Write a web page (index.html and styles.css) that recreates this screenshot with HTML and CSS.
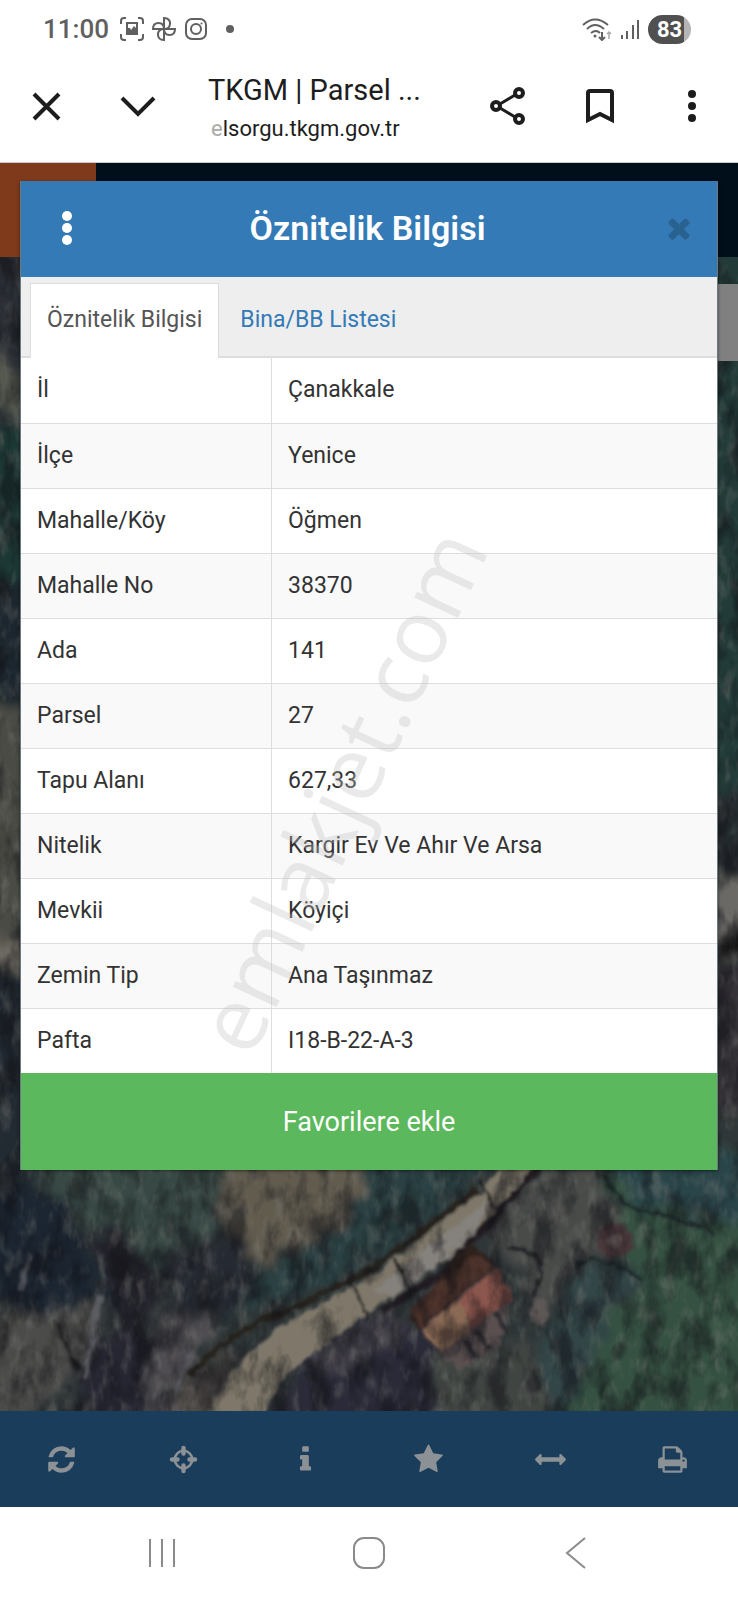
FILE: index.html
```html
<!DOCTYPE html>
<html lang="tr">
<head>
  <meta charset="UTF-8" />
  <meta name="viewport" content="width=device-width, initial-scale=1.0" />
  <title>TKGM | Parsel Sorgu</title>
  <link rel="stylesheet" href="styles.css">
</head>
<body>
  <header class="status-bar">
    <div class="status-left">
      <span class="clock">11:00</span>
      <svg class="status-icon" viewBox="0 0 24 24" fill="none" stroke="currentColor" stroke-width="2">
        <path d="M1 7V4q0-3 3-3h2M18 1h2q3 0 3 3v3M23 17v3q0 3-3 3h-2M6 23H4q-3 0-3-3v-3" />
        <path d="M7 6h10v11H7z" />
        <path d="M7 11l3 0 1 2 3-4 3 3v5H7z" fill="currentColor" stroke="none" />
      </svg>
      <svg class="status-icon" viewBox="0 0 24 24" fill="none" stroke="currentColor" stroke-width="2">
        <path d="M12 12V1q6 0 6 5.500T12 12h11q0 6-5.500 6T12 12v11q-6 0-6-5.500T12 12H1q0-6 5.500-6T12 12" />
      </svg>
      <svg class="status-icon" viewBox="0 0 24 24" fill="none" stroke="currentColor" stroke-width="2">
        <rect x="2" y="2" width="20" height="20" rx="6" />
        <circle cx="12" cy="12" r="5" />
        <circle cx="17.500" cy="6.500" r="1" fill="currentColor" stroke="none" />
      </svg>
      <span class="status-dot"></span>
    </div>
    <div class="status-right">
      <svg class="wifi" viewBox="0 0 30 24" fill="none" stroke="currentColor" stroke-width="2">
        <path d="M1 8q12-11 25 0M5 12q8-8 17 0M9 16q5-4 9 0" />
        <circle cx="13" cy="19" r="1.500" fill="currentColor" stroke="none" />
        <path d="M20 15v8M17 20l3 3 3-3" />
        <path d="M27 22v-7M25 17l2-2 2 2" stroke="#aaa" stroke-width="1.500" />
      </svg>
      <svg class="signal" viewBox="0 0 20 20" stroke="currentColor" stroke-width="2">
        <path d="M2 16v4M7 12v8M13 6v14M18 1v19" />
      </svg>
      <span class="battery">83</span>
    </div>
  </header>

  <div class="browser-bar">
    <button class="browser-btn" aria-label="Kapat">
      <svg viewBox="0 0 40 40" fill="none" stroke="currentColor" stroke-width="4"><path d="M8 8l25 25M33 8L8 33" /></svg>
    </button>
    <button class="browser-btn down" aria-label="Küçült">
      <svg viewBox="0 0 40 40" fill="none" stroke="currentColor" stroke-width="4"><path d="M4 12l16 16 16-16" /></svg>
    </button>
    <div class="page-info">
      <div class="page-title">TKGM | Parsel ...</div>
      <div class="page-url"><span class="faded">e</span>lsorgu.tkgm.gov.tr</div>
    </div>
    <button class="browser-btn share" aria-label="Paylaş">
      <svg viewBox="0 0 40 40" fill="none" stroke="currentColor" stroke-width="4">
        <circle cx="8" cy="20" r="4" /><circle cx="31" cy="7" r="4" /><circle cx="31" cy="33" r="4" />
        <path d="M12 18L27 9M12 22l15 9" stroke-width="3" />
      </svg>
    </button>
    <button class="browser-btn mark" aria-label="Yer işareti">
      <svg viewBox="0 0 40 40" fill="none" stroke="currentColor" stroke-width="4"><path d="M8 34V7q0-2 2-2h20q2 0 2 2v27l-12-6z" /></svg>
    </button>
    <button class="browser-btn more" aria-label="Diğer">
      <svg viewBox="0 0 40 40" fill="currentColor"><circle cx="20" cy="8" r="4" /><circle cx="20" cy="20" r="4" /><circle cx="20" cy="32" r="4" /></svg>
    </button>
  </div>

  <main class="app">
    <div class="app-header"><div class="app-logo"></div></div>

    <div class="map">
      <svg class="map-image" viewBox="0 257 738 1154" preserveAspectRatio="xMidYMax slice">
        <defs>
          <filter id="rough" x="-5%" y="-5%" width="110%" height="110%">
            <feTurbulence type="fractalNoise" baseFrequency="0.05" numOctaves="4" seed="4" result="n" />
            <feDisplacementMap in="SourceGraphic" in2="n" scale="36" xChannelSelector="R" yChannelSelector="G" />
            <feGaussianBlur stdDeviation="4" />
          </filter>
          <filter id="soft">
            <feTurbulence type="fractalNoise" baseFrequency="0.09" numOctaves="3" seed="2" result="n" />
            <feDisplacementMap in="SourceGraphic" in2="n" scale="9" xChannelSelector="R" yChannelSelector="G" />
            <feGaussianBlur stdDeviation="1.500" />
          </filter>
          <filter id="shade" x="0" y="0" width="100%" height="100%" color-interpolation-filters="sRGB">
            <feTurbulence type="fractalNoise" baseFrequency="0.045 0.025" numOctaves="4" seed="9" />
            <feColorMatrix values="0 0 0 0 0.06  0 0 0 0 0.06  0 0 0 0 0.08  2.5 2 0 0 -2" />
          </filter>
          <filter id="light" x="0" y="0" width="100%" height="100%" color-interpolation-filters="sRGB">
            <feTurbulence type="fractalNoise" baseFrequency="0.08 0.04" numOctaves="3" seed="21" />
            <feColorMatrix values="0 0 0 0 0.5  0 0 0 0 0.5  0 0 0 0 0.48  2.5 2 0 0 -2.2" />
          </filter>
        </defs>
        <rect y="257" width="738" height="1154" fill="#303738" />
        <g filter="url(#rough)">
          <!-- left edge -->
          <path d="M-10 250H40V375L-10 350z" fill="#2b2d35" />
          <path d="M-10 345L40 385V430L-10 400z" fill="#55584f" />
          <path d="M-10 425H40V580H-10z" fill="#1d3934" />
          <path d="M-10 580H40V700H-10z" fill="#1d272e" />
          <path d="M-10 710H40V960H-10z" fill="#4c4b45" />
          <path d="M-10 940H40V970H-10z" fill="#6b665f" />
          <path d="M-10 975H40V1180H-10z" fill="#232b33" />
          <!-- right edge -->
          <path d="M700 240H760V790H700z" fill="#213a39" />
          <path d="M700 790H760V880H700z" fill="#252e33" />
          <path d="M700 885L760 870V950L700 970z" fill="#6b6965" />
          <path d="M700 952L760 920V940L700 970z" fill="#161616" />
          <path d="M700 970H760V1110H700z" fill="#343238" />
          <!-- fields -->
          <path d="M20 1155H225L210 1230 150 1270 90 1235 60 1195z" fill="#384a45" />
          <path d="M222 1155H370L350 1225 260 1262 222 1225z" fill="#625c4f" />
          <path d="M375 1155H495L440 1215 350 1275 230 1320 240 1280 340 1235z" fill="#2b3f42" />
          <path d="M590 1150H760V1430H560L600 1340 640 1280 610 1220z" fill="#345143" />
          <path d="M610 1155H760V1225L640 1210z" fill="#2c444a" />
          <path d="M520 1170L600 1160 625 1240 575 1275 545 1310 510 1260 480 1230z" fill="#4a4b49" />
          <path d="M580 1270L640 1265 600 1340 560 1430H500L550 1330z" fill="#334446" />
          <!-- tree shadows -->
          <path d="M-10 1180L60 1195 95 1260 105 1310 50 1315-10 1300z" fill="#1f2533" />
          <path d="M95 1225L130 1235 160 1290 140 1350 105 1300z" fill="#23222a" />
          <path d="M160 1265L235 1225 260 1265 230 1320 180 1315z" fill="#252931" />
          <path d="M60 1340L120 1330 160 1345 145 1430H90z" fill="#272831" />
          <path d="M5 1310L100 1305 80 1370 20 1430H-10V1340z" fill="#4c4c4a" />
          <path d="M160 1310L210 1320 175 1430H150z" fill="#4f4e51" />
          <path d="M180 1380L240 1350 210 1430H175z" fill="#4a4542" />
          <path d="M270 1430L300 1360 370 1310 430 1330 450 1430z" fill="#2b2a37" />
          <path d="M290 1360L380 1310 410 1335 350 1370z" fill="#403e46" />
          <path d="M430 1345L530 1345 560 1430H440z" fill="#404543" />
        </g>
        <rect y="257" width="738" height="1154" filter="url(#light)" opacity=".35" />
        <g filter="url(#soft)">
          <!-- road -->
          <path d="M206 1420Q235 1350 300 1315L378 1272 430 1230 480 1193 505 1160H542L515 1193 475 1240 400 1290 345 1330 285 1375 262 1420z" fill="#7f786a" />
          <path d="M375 1290L490 1198 475 1235 395 1298z" fill="#85817c" />
          <path d="M190 1375Q235 1325 290 1310L370 1270 478 1190" fill="none" stroke="#25231d" stroke-width="6" />
          <path d="M545 1160L490 1222 440 1275 380 1312" fill="none" stroke="#211f22" stroke-width="7" />
          <path d="M350 1275l18 44M395 1260l18 35M480 1180l15 30M55 1322l25 50" stroke="#1c1e1f" stroke-width="3" />
          <path d="M100 1295L84 1380M30 1255l-10 35M175 1395l15-40" stroke="#5c5d64" stroke-width="5" />
          <!-- house -->
          <path d="M408 1318L470 1242 497 1264 420 1330z" fill="#2f211f" />
          <path d="M410 1310L466 1260 480 1255 495 1265 420 1328z" fill="#4b302b" />
          <path d="M423 1329L497 1267 514 1298 490 1325 440 1354z" fill="#8b564d" />
          <path d="M423 1329L460 1300 475 1332 440 1354z" fill="#8a6a55" />
          <path d="M440 1354L490 1315 510 1300 500 1345 460 1370z" fill="#5a4f50" />
          <path d="M465 1340l12 18M475 1330l14 20M496 1312l12 22" stroke="#2b2b2f" stroke-width="5" />
          <!-- garden -->
          <circle cx="615" cy="1240" r="18" fill="#48383a" />
          <circle cx="615" cy="1240" r="7" fill="#625552" />
          <path d="M507 1248Q560 1250 532 1295" fill="none" stroke="#222325" stroke-width="4" />
          <path d="M575 1268l14-10q30 5 52 21M605 1175q10 35 60 40l50 18" fill="none" stroke="#1d282a" stroke-width="3" />
          <ellipse cx="540" cy="1312" rx="10" ry="14" fill="#5d5856" />
        </g>
        <rect y="257" width="738" height="1154" filter="url(#shade)" opacity=".5" />
      </svg>
      <div class="map-control"></div>
    </div>

    <nav class="toolbar">
      <button class="tool" aria-label="Yenile"><svg viewBox="0 0 1792 1792"><path d="M1639 1056q0 5-1 7-64 268-268 434.500t-478 166.500q-146 0-282.500-55t-243.500-157l-129 129q-19 19-45 19t-45-19-19-45v-448q0-26 19-45t45-19h448q26 0 45 19t19 45-19 45l-137 137q71 66 161 102t187 36q134 0 250-65t186-179q11-17 53-117 8-23 30-23h192q13 0 22.500 9.500t9.500 22.500zm25-800v448q0 26-19 45t-45 19h-448q-26 0-45-19t-19-45 19-45l138-138q-148-137-349-137-134 0-250 65t-186 179q-11 17-53 117-8 23-30 23h-199q-13 0-22.500-9.500t-9.500-22.500v-7q65-268 270-434.500t480-166.500q146 0 284 55.500t245 156.500l130-129q19-19 45-19t45 19 19 45z" /></svg></button>
      <button class="tool" aria-label="Konum"><svg class="locate" viewBox="0 0 31 31"><circle cx="15.500" cy="15.500" r="8.700" stroke-width="2.600" /><path d="M15.500 4v5.500M15.500 21.500V27M4 15.500h5.500M21.500 15.500H27" stroke-width="4.400" stroke-linecap="round" /></svg></button>
      <button class="tool" aria-label="Bilgi"><svg viewBox="0 0 1792 1792"><path d="M1216 1344v128q0 26-19 45t-45 19h-512q-26 0-45-19t-19-45v-128q0-26 19-45t45-19h64v-384h-64q-26 0-45-19t-19-45v-128q0-26 19-45t45-19h384q26 0 45 19t19 45v576h64q26 0 45 19t19 45zm-128-1152v192q0 26-19 45t-45 19h-256q-26 0-45-19t-19-45v-192q0-26 19-45t45-19h256q26 0 45 19t19 45z" /></svg></button>
      <button class="tool" aria-label="Favoriler"><svg viewBox="0 0 1792 1792"><path d="M1728 647q0 22-26 48l-363 354 86 500q1 7 1 20 0 21-10.500 35.500t-30.500 14.500q-19 0-40-12l-449-236-449 236q-22 12-40 12-21 0-31.500-14.500t-10.500-35.500q0-6 2-20l86-500-364-354q-25-27-25-48 0-37 56-46l502-73 225-455q19-41 49-41t49 41l225 455 502 73q56 9 56 46z" /></svg></button>
      <button class="tool" aria-label="Ölçüm"><svg viewBox="0 0 1792 1792"><path d="M1792 896q0 26-19 45l-256 256q-19 19-45 19t-45-19-19-45v-128h-1024v128q0 26-19 45t-45 19-45-19l-256-256q-19-19-19-45t19-45l256-256q19-19 45-19t45 19 19 45v128h1024v-128q0-26 19-45t45-19 45 19l256 256q19 19 19 45z" /></svg></button>
      <button class="tool" aria-label="Yazdır"><svg viewBox="0 0 1792 1792"><path d="M448 1536h896v-256h-896v256zm0-640h896v-384h-160q-40 0-68-28t-28-68v-160h-640v640zm1152 64q0-26-19-45t-45-19-45 19-19 45 19 45 45 19 45-19 19-45zm128 0v416q0 13-9.500 22.500t-22.500 9.500h-224v160q0 40-28 68t-68 28h-960q-40 0-68-28t-28-68v-160h-224q-13 0-22.500-9.500t-9.500-22.500v-416q0-79 56.500-135.500t135.500-56.500h64v-544q0-40 28-68t68-28h672q40 0 88 20t76 48l152 152q28 28 48 76t20 88v256h64q79 0 135.500 56.500t56.500 135.500z" /></svg></button>
    </nav>

    <section class="modal">
      <div class="modal-header">
        <button class="modal-menu" aria-label="Menü">
          <svg viewBox="0 0 10 34" fill="currentColor"><circle cx="5" cy="5" r="5" /><circle cx="5" cy="17" r="5" /><circle cx="5" cy="29" r="5" /></svg>
        </button>
        <h1 class="modal-title">Öznitelik Bilgisi</h1>
        <button class="modal-close" aria-label="Kapat">
          <svg viewBox="0 0 1792 1792" fill="currentColor"><path d="M1490 1322q0 40-28 68l-136 136q-28 28-68 28t-68-28l-294-294-294 294q-28 28-68 28t-68-28l-136-136q-28-28-28-68t28-68l294-294-294-294q-28-28-28-68t28-68l136-136q28-28 68-28t68 28l294 294 294-294q28-28 68-28t68 28l136 136q28 28 28 68t-28 68l-294 294 294 294q28 28 28 68z" /></svg>
        </button>
      </div>
      <div class="tabs">
        <button class="tab active">Öznitelik Bilgisi</button>
        <button class="tab">Bina/BB Listesi</button>
      </div>
      <table class="info-table">
        <tr><th scope="row">İl</th><td>Çanakkale</td></tr>
        <tr><th scope="row">İlçe</th><td>Yenice</td></tr>
        <tr><th scope="row">Mahalle/Köy</th><td>Öğmen</td></tr>
        <tr><th scope="row">Mahalle No</th><td>38370</td></tr>
        <tr><th scope="row">Ada</th><td>141</td></tr>
        <tr><th scope="row">Parsel</th><td>27</td></tr>
        <tr><th scope="row">Tapu Alanı</th><td>627,33</td></tr>
        <tr><th scope="row">Nitelik</th><td>Kargir Ev Ve Ahır Ve Arsa</td></tr>
        <tr><th scope="row">Mevkii</th><td>Köyiçi</td></tr>
        <tr><th scope="row">Zemin Tip</th><td>Ana Taşınmaz</td></tr>
        <tr><th scope="row">Pafta</th><td>I18-B-22-A-3</td></tr>
      </table>
      <button class="favorite-btn">Favorilere ekle</button>
      <div class="watermark">emlakjet.com</div>
    </section>
  </main>

  <footer class="nav-bar">
    <button class="nav-btn" aria-label="Son uygulamalar">
      <svg viewBox="0 0 32 32" fill="none" stroke="currentColor" stroke-width="2"><path d="M4 2v28M16 2v28M28 2v28" /></svg>
    </button>
    <button class="nav-btn" aria-label="Ana ekran">
      <svg viewBox="0 0 32 32" fill="none" stroke="currentColor" stroke-width="2"><rect x="1" y="1" width="30" height="30" rx="10" /></svg>
    </button>
    <button class="nav-btn" aria-label="Geri">
      <svg viewBox="0 0 32 32" fill="none" stroke="currentColor" stroke-width="2"><path d="M25 1L7 16l18 15" /></svg>
    </button>
  </footer>
</body>
</html>
```

FILE: styles.css
```css
:root {
  --primary: #337ab7;
  --success: #5cb85c;
  --border: #ddd;
  --text: #333;
  --status: #606060;
}

* {
  box-sizing: border-box;
}

body {
  margin: 0;
  min-height: 100vh;
  display: flex;
  flex-direction: column;
  font-family: Roboto, "Liberation Sans", sans-serif;
  font-size: 23px;
  color: var(--text);
  background: #fff;
}

button {
  margin: 0;
  padding: 0;
  border: none;
  background: none;
  font: inherit;
  color: inherit;
  cursor: pointer;
}

svg {
  display: block;
}

/* Phone status bar */
.status-bar {
  height: 58px;
  padding: 0 47px 0 43px;
  display: flex;
  align-items: center;
  justify-content: space-between;
  color: var(--status);
}

.status-left,
.status-right {
  display: flex;
  align-items: center;
  gap: 8px;
}

.clock {
  margin-right: 3px;
  font-size: 26px;
  font-weight: 500;
}

.status-icon {
  width: 24px;
  height: 24px;
}

.status-dot {
  width: 8px;
  height: 8px;
  margin-left: 10px;
  border-radius: 50%;
  background: var(--status);
}

.wifi {
  width: 30px;
  height: 24px;
}

.signal {
  width: 20px;
  height: 20px;
}

.battery {
  width: 43px;
  height: 29px;
  border-radius: 15px;
  background: linear-gradient(to right, #505050 83%, #b5b5b5 83%);
  color: #fff;
  font-size: 22px;
  font-weight: 700;
  line-height: 29px;
  text-align: center;
}

/* Browser bar */
.browser-bar {
  height: 105px;
  padding: 0 26px 8px;
  display: flex;
  align-items: center;
  color: #1d1d1d;
  border-bottom: 1px solid #c5cdd3;
}

.browser-btn svg {
  width: 40px;
  height: 40px;
}

.browser-btn.down {
  margin-left: 52px;
}

.page-info {
  flex: 1;
  margin-left: 50px;
  padding-top: 6px;
  white-space: nowrap;
}

.page-title {
  font-size: 29px;
  line-height: 40px;
}

.page-url {
  padding-left: 3px;
  font-size: 22px;
  line-height: 38px;
}

.faded {
  color: #aaa;
}

.browser-btn.mark {
  margin-left: 52px;
}

.browser-btn.more {
  margin-left: 52px;
}

/* Map application */
.app {
  position: relative;
  flex: 1;
  display: flex;
  flex-direction: column;
}

.app-header {
  height: 94px;
  background: #000f1a;
}

.app-logo {
  width: 96px;
  height: 100%;
  background: #7f3a1b;
}

.map {
  position: relative;
  flex: 1;
  min-height: 1060px;
  overflow: hidden;
}

.map-image {
  position: absolute;
  width: 100%;
  height: 100%;
}

.map-control {
  position: absolute;
  top: 27px;
  right: 0;
  width: 40px;
  height: 77px;
  background: #808080;
}

.toolbar {
  height: 96px;
  padding-right: 4px;
  display: flex;
  background: #1a3d5c;
}

.tool {
  flex: 1;
  display: flex;
  align-items: center;
  justify-content: center;
}

.tool svg {
  width: 31px;
  height: 31px;
  fill: #8b9194;
}

.tool .locate {
  fill: none;
  stroke: #8b9194;
}

/* Attribute window */
.modal {
  position: absolute;
  top: 18px;
  left: 20px;
  right: 20px;
  overflow: hidden;
  background: #fff;
  border: 1px solid #6b7b80;
  border-width: 0 1px;
  box-shadow: 0 1px 3px rgba(0,0,0,0.5);
}

.modal-header {
  height: 96px;
  padding: 0 22px 2px 41px;
  display: flex;
  align-items: center;
  justify-content: space-between;
  background: var(--primary);
  color: #fff;
}

.modal-menu svg {
  width: 10px;
  height: 34px;
}

.modal-title {
  margin: 0;
  font-size: 34px;
  font-weight: 600;
}

.modal-close {
  color: #296191;
}

.modal-close svg {
  width: 32px;
  height: 32px;
}

.tabs {
  height: 81px;
  padding: 6px 9px 0;
  display: flex;
  background: #eee;
  border-bottom: 2px solid var(--border);
}

.tab {
  height: 75px;
  padding: 0 16px 4px;
  color: var(--primary);
  border: 1px solid transparent;
  border-bottom: none;
}

.tab + .tab {
  margin-left: 4px;
}

.tab.active {
  background: #fff;
  color: #555;
  border-color: var(--border);
}

.info-table {
  width: 100%;
  border-collapse: collapse;
  table-layout: fixed;
}

.info-table tr:nth-child(even) {
  background: #f9f9f9;
}

.info-table tr + tr {
  border-top: 1px solid var(--border);
}

.info-table th,
.info-table td {
  height: 65px;
  padding: 0 16px 1px;
  font-weight: 400;
  text-align: left;
}

.info-table th {
  width: 36%;
  border-right: 1px solid var(--border);
}

.favorite-btn {
  display: block;
  width: 100%;
  height: 97px;
  background: var(--success);
  color: #fff;
  font-size: 27px;
}

.watermark {
  position: absolute;
  left: 240px;
  bottom: 106px;
  font-family: "Open Sans", sans-serif;
  font-size: 90px;
  line-height: 1;
  color: rgba(190,190,190,0.33);
  transform: rotate(-65deg);
  transform-origin: 0 100%;
  pointer-events: none;
}

/* Phone navigation */
.nav-bar {
  height: 93px;
  padding: 0 58px 2px;
  display: flex;
  align-items: center;
  color: #8a8a8a;
}

.nav-btn {
  flex: 1;
  display: flex;
  justify-content: center;
}

.nav-btn svg {
  width: 32px;
  height: 32px;
}
```
